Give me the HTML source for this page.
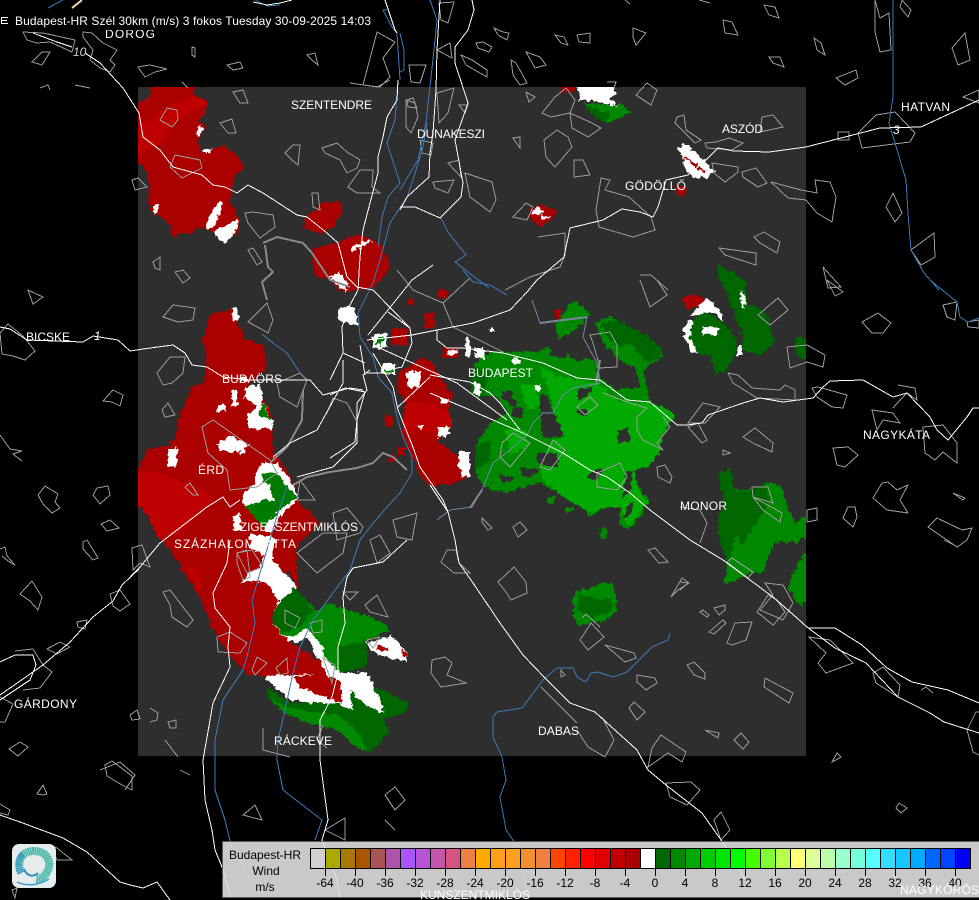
<!DOCTYPE html>
<html><head><meta charset="utf-8"><title>Budapest-HR Wind</title>
<style>
html,body{margin:0;padding:0;background:#000;width:979px;height:900px;overflow:hidden}
svg{display:block;position:absolute;left:0;top:0}
text{font-family:"Liberation Sans",sans-serif;font-size:12px}
.o{fill:none;stroke:#9c9c9c;stroke-width:1}
.w{fill:none;stroke:#fff;stroke-width:1}
.b{fill:none;stroke:#3f78b8;stroke-width:1}
.g{fill:none;stroke:#8a8a8a;stroke-width:2}
.l text{fill:#fff}
.k text{fill:#000;text-anchor:middle}
</style></head><body>
<svg width="979" height="900" viewBox="0 0 979 900" shape-rendering="crispEdges">
<defs>
<filter id="r" filterUnits="userSpaceOnUse" x="0" y="0" width="979" height="900" color-interpolation-filters="sRGB">
<feTurbulence type="fractalNoise" baseFrequency=".22" numOctaves="2" seed="4" result="n"/>
<feDisplacementMap in="SourceGraphic" in2="n" scale="7" xChannelSelector="R" yChannelSelector="G"/>
</filter>
<clipPath id="p"><rect x="138" y="87" width="668" height="669"/></clipPath>
</defs>
<rect width="979" height="900" fill="#000"/>
<rect x="138" y="87" width="668" height="669" fill="#2e2e2e"/>

<g clip-path="url(#p)"><g filter="url(#r)">
<!-- radar reds -->
<g fill="#aa0000">
<path d="M150 80 198 80 193 95 207 100 206 112 198 122 205 125 198 143 202 153 212 148 225 146 240 160 243 168 233 180 230 203 240 220 238 232 225 243 213 233 202 227 190 233 173 237 168 223 158 215 152 213 147 200 150 187 147 170 132 160 132 105 150 97z"/>
<path d="M308 215 323 203 342 201 342 213 333 227 320 235 303 227z"/>
<path d="M312 248 337 243 347 237 363 235 380 243 390 263 387 273 373 287 357 290 343 293 330 280 317 277 312 263z"/>
<path d="M529 210 540 204 557 212 551 220 540 226 530 220z"/>
<path d="M675 186 686 186 686 192 681 197 676 192z"/>
<path d="M560 82 575 82 575 92 562 92z"/>
<path d="M210 315 233 308 238 320 243 337 265 347 265 370 248 385 263 397 272 417 273 453 287 470 293 483 298 500 320 523 300 543 290 560 277 603 273 623 287 640 313 657 330 670 340 682 342 703 323 697 290 690 265 676 247 673 228 653 213 630 200 598 182 570 170 548 158 538 150 520 132 497 132 477 150 448 167 447 175 437 180 415 192 387 205 382 207 347 202 343z"/>
<path d="M398 373 422 358 433 363 440 377 453 395 448 410 452 420 448 433 438 440 462 460 470 467 468 478 453 483 433 487 422 480 413 457 408 450 402 433 405 403 397 387z"/>
<path d="M385 415 393 417 393 427 385 427z M397 447 405 447 405 455 397 455z M390 455 395 455 395 463 390 463z M425 313 435 313 435 328 425 328z M437 290 447 290 447 298 437 298z M408 299 413 299 413 305 408 305z M392 328 408 328 408 345 392 345z M443 348 458 348 458 358 443 358z M555 310 562 310 562 318 555 318z"/>
<path d="M682 300 693 294 708 300 707 305 692 307 688 312z"/>
</g>
<g fill="#bf0000">
<path d="M132 160 160 143 172 125 207 103 195 96 170 105 150 120 132 125z"/>
<path d="M132 477 150 470 197 487 212 497 207 507 180 533 158 538 150 520 132 497z"/>
<path d="M187 568 195 568 203 588 197 588z"/>
<path d="M405 403 428 403 448 410 452 420 448 433 420 430 403 432z"/>
</g>

<!-- radar greens -->
<g fill="#008800">
<path d="M473 367 483 355 497 352 533 352 550 348 550 357 562 358 567 353 577 363 587 358 595 360 600 377 615 390 640 387 637 370 618 358 603 343 595 323 610 317 630 327 650 337 662 350 662 357 643 370 647 387 650 402 673 412 673 420 663 433 660 453 647 467 633 470 637 483 648 500 643 513 627 530 618 523 620 513 620 507 607 507 590 517 580 503 560 493 540 483 523 487 510 493 493 490 483 487 475 470 475 447 490 423 507 413 497 397 477 397z"/>
<path d="M557 323 573 300 590 313 583 323 567 335 558 338z"/>
<path d="M546 497 555 497 555 503 546 503z M567 507 574 507 574 512 567 512z M600 528 607 528 607 538 600 538z"/>
<path d="M720 472 730 468 735 490 752 490 765 482 782 487 788 507 795 523 812 512 812 537 793 542 775 542 762 573 752 573 743 577 723 585 727 567 722 547 717 533 720 513 725 507 720 483z"/>
<path d="M787 587 803 553 812 553 812 600 800 605 793 597z"/>
<path d="M573 598 577 590 588 590 602 583 612 583 617 600 616 610 605 622 591 622 579 627 573 617z"/>
</g>
<g fill="#00aa00">
<path d="M540 367 560 377 577 380 597 383 617 400 650 403 673 413 673 420 663 433 660 453 647 467 633 470 638 487 647 503 627 527 620 507 607 507 590 513 563 497 543 480 540 470 553 440 563 437 553 413 550 393z"/>
<path d="M520 385 535 385 540 405 528 412z M505 430 525 430 530 445 510 455z"/>
</g>
<g fill="#006600">
<path d="M600 323 617 320 650 337 662 350 660 357 647 363 630 343 620 347 603 333z"/>
<path d="M475 447 490 440 490 460 475 470z M473 367 490 370 483 397 470 393z"/>
<path d="M720 472 730 468 735 490 748 492 740 520 730 560 723 585 727 567 722 547 717 533 720 513 725 507 720 483z"/>
<path d="M748 492 765 482 770 500 755 525 742 545 735 530z"/>
<path d="M580 595 600 600 612 598 612 612 590 618 577 610z"/>
<path d="M720 280 745 280 748 305 760 308 768 317 774 343 760 355 743 350 742 335 733 310 725 290z"/>
<path d="M717 265 733 272 745 282 720 282z"/>
<path d="M687 323 705 312 723 323 735 335 737 350 727 370 715 375 712 358 697 353 688 343z"/>
<path d="M795 338 812 337 812 360 798 358 795 350z"/>
</g>
<g fill="#2e2e2e">
<path d="M617 430 628 428 630 442 618 443z M577 390 593 388 587 397 578 400z M577 410 585 408 587 415 577 415z M540 413 553 413 565 437 543 437z M540 395 547 395 553 412 540 412z M502 392 510 390 517 407 503 400z M513 407 523 407 523 417 512 417z M537 453 557 453 558 467 537 463z M520 467 540 470 530 477 523 477z M593 470 603 470 597 480 588 478z M627 470 633 470 630 493 622 497z M627 507 635 500 630 517 623 518z M500 475 515 477 510 482 500 482z"/>
</g>

<!-- white, SW band -->
<g fill="#fff">
<path d="M250 547 267 548 275 563 297 587 278 603 272 620 287 637 297 635 307 628 320 643 327 660 340 673 367 672 373 683 380 700 383 713 363 703 350 690 353 710 337 703 310 703 290 700 267 680 265 676 317 673 330 680 317 657 307 637 297 643 287 640 275 627 273 613 278 600 267 583 253 580 242 583 248 573 260 567 265 550z"/>
<path d="M255 473 262 463 277 463 290 480 298 497 295 503 285 510 270 535 263 527 245 507 240 497 250 487 256 483z"/>
<path d="M250 533 277 538 270 563 262 555 250 547z"/>
<path d="M233 517 240 513 241 530 235 530z"/>
<path d="M245 387 260 383 263 403 273 422 272 430 248 428 248 415 258 407 245 398z"/>
<path d="M217 443 230 436 240 440 250 445 242 451 230 452 220 450z M240 445 244 445 244 455 240 455z"/>
<path d="M168 448 177 448 177 467 168 467z M232 390 237 390 237 407 232 407z M217 405 222 405 222 412 217 412z M222 403 226 403 226 411 222 411z M240 378 248 376 248 382 240 382z"/>
<path d="M232 308 238 308 238 320 233 320z"/>
<path d="M205 223 218 202 223 203 218 217 213 227 208 230z M213 232 237 220 238 227 227 243 220 240z M155 205 159 204 158 213 152 213z M198 125 203 127 199 138 196 136z M203 150 212 148 210 153 204 154z"/>
<path d="M330 277 340 273 347 283 347 292 340 288z M350 248 368 240 372 242 352 252z"/>
<path d="M532 210 538 207 545 213 532 214z M540 215 552 217 542 220z"/>
<path d="M574 82 614 82 615 93 610 100 618 105 607 104 592 100 577 100 579 95z"/>
<path d="M678 148 684 143 695 152 715 172 709 177 695 178 686 170 684 160z"/>
<path d="M340 307 355 307 357 325 345 323 337 318z M373 333 387 333 387 348 373 348z M382 363 395 363 395 375 382 375z M407 372 420 372 420 387 407 387z M441 398 448 398 448 403 441 403z M418 425 423 425 423 428 418 428z M438 427 450 427 448 436 438 437z M459 452 470 450 470 477 462 477 458 465z"/>
<path d="M465 337 470 337 470 357 465 357z M475 348 485 348 485 358 475 358z M513 358 520 358 520 365 513 365z M535 385 540 385 540 390 535 390z M490 328 495 328 495 332 490 332z M475 383 480 383 480 395 475 395z M447 352 457 349 458 354 447 356z"/>
<path d="M690 315 707 298 720 310 723 323 713 313 705 312 695 317z M682 330 688 320 692 322 690 337 697 353 690 352z M703 327 717 327 717 335 703 335z M738 345 743 345 743 355 738 355z M741 290 746 300 744 310 740 300z"/>
<path d="M367 643 390 635 403 647 408 655 407 662 387 658 370 650z"/>
</g>
<g fill="#aa0000">
<path d="M293 677 317 673 340 680 342 703 323 697 300 687z M376 645 390 648 388 651 376 650z M403 650 408 655 406 658 402 654z M682 156 685 156 706 172 704 174z M285 563 295 552 298 590 288 570z"/>
</g>
<g fill="#007a00">
<path d="M262 402 270 417 272 420 258 415z"/>
<path d="M262 473 277 473 290 490 297 497 277 513 263 527 245 507 263 500 273 500 270 483 262 483z"/>
<path d="M378 338 384 338 380 346 376 344z M385 370 393 369 392 374 385 374z"/>
</g>
<g fill="#008800">
<path d="M278 603 295 588 303 598 317 610 330 603 347 610 367 615 383 623 390 630 367 640 367 667 340 673 327 660 320 643 307 628 297 635 287 637 278 630 272 620 273 613z"/>
</g>
<g fill="#006600">
<path d="M278 603 295 588 303 598 313 610 300 627 283 633 272 620 273 613z M337 647 367 640 367 667 340 673z"/>
<path d="M265 685 290 703 310 703 337 703 353 710 350 690 363 703 383 713 380 700 373 687 408 702 405 713 383 720 390 730 377 747 367 753 350 743 337 730 310 723 283 713 270 700z"/>
</g>
<path fill="#008800" d="M270 697 290 708 340 716 360 735 367 753 350 743 337 730 310 723 283 713z"/>
<path fill="#008800" d="M583 103 599 104 622 105 631 112 622 117 607 123 592 115z"/>
<path fill="#006600" d="M583 103 599 110 610 113 607 123 592 115z"/>
</g></g>

<!-- city outlines -->
<path class="o" d="M103 401 113 390 123 395 120 406 112 402z M0 333 8 324 23 336 35 351 25 360 13 356 2 354z M28 290 43 297 33 304z M0 435 10 449 22 451 13 454 22 461 M38 495 45 486 58 494 55 502 60 508 52 513 43 504z M93 495 97 488 108 486 110 495 100 504z M101 524 110 520 119 528 107 531z M83 542 87 540 98 558 93 560 83 549z M0 549 5 547 7 556 15 565 8 561 2 556 M20 594 32 581 42 597 38 610 30 601z M77 622 87 620 85 629 78 627z M110 594 120 590 130 604 120 611 113 606z M15 651 33 649 43 665 52 672 40 688 23 690 M47 649 60 642 70 647 57 654z M0 697 13 704 5 722 0 722 M9 749 20 742 28 747 18 756z M37 794 43 785 47 794 43 795z M105 765 112 761 132 776 132 790 122 785 107 776z M130 715 137 710 140 719 132 720z M0 804 10 810 8 815 0 813 M50 845 57 848 72 860 57 860z M12 890 17 888 15 898z
M23 32 43 33 75 40 72 52 50 42 37 43 27 40z M83 32 92 33 103 43 117 50 110 60 115 65 110 72 100 68 90 60 93 50 83 37z M32 62 42 52 50 52 42 65z M138 67 150 65 167 69 155 72 145 77z M192 47 195 48 195 57 192 55z M227 65 240 62 243 68 233 70z M307 55 315 53 318 65 312 60z M377 32 395 42 383 58 390 77 380 87 363 85z M40 88 48 85 50 90 M75 85 90 88 M182 82 188 88
M494 28 503 32 509 33 507 40 498 35z M476 43 483 42 492 47 489 52 478 48z M555 35 564 37 568 45 561 43z M577 35 590 33 590 43 579 42z M633 28 646 33 636 45 633 37z M723 20 732 22 738 35 725 33z M764 5 775 7 779 18 769 15z M769 57 780 57 784 67 773 63z M814 38 821 43 825 55 817 50z M836 78 856 70 858 78 845 85z M952 48 965 33 970 60 958 65z M902 0 911 10 908 17 900 7z M625 0 630 4 M699 0 710 3 M511 60 516 63 527 83 520 85 513 75z M526 52 540 57 546 65 535 68z M461 55 472 60 487 70 487 77 466 65z M409 65 426 65 420 83 411 82z M437 50 450 43 452 58z M439 3 454 2 448 23 441 20z M875 0 880 18 889 13 891 50 880 52 875 32z M823 267 832 277 841 287 828 288z
M607 82 616 82 614 88 M636 95 647 83 657 90 651 105z M526 92 535 97 529 102z M542 113 555 97 566 88 575 100 570 113 551 117z M570 113 592 123 601 128 588 137 572 128z M513 138 520 137 520 148z M544 140 557 130 568 137 572 147 555 167 546 157z M574 160 583 160 590 175 574 177z M601 178 610 180 605 190 629 197 651 217 655 230 633 237 599 227 596 210z M513 217 526 203 533 207 527 220z M538 237 565 233 565 255 560 267 530 277 505 290 M677 117 684 115 686 130 701 140 695 143 675 123z M705 143 716 142 729 138 743 143 732 150 707 148z M712 163 738 167 738 172 725 182 714 173z M742 172 756 168 767 183 758 187 743 177z M771 182 801 190 817 193 815 180 830 182 836 197 832 222 817 213 806 200 788 198z M754 237 764 232 780 242 777 253 760 243z M719 248 756 253 756 265 725 255z M640 275 651 275 668 290 M762 117 773 115 783 127 760 132z M858 133 876 115 895 112 915 133 910 142 862 148z M838 132 849 132 849 140 838 140z M886 207 893 193 902 213 895 222z M911 250 934 233 935 257 921 265z M963 97 979 90 979 103z M406 100 415 103 418 117 411 133 406 127z M437 93 454 88 448 113 439 123z M459 105 468 105 465 113z M420 140 433 143 431 155 422 153z M433 182 454 180 448 193 435 188z M465 173 492 182 496 200 490 212 470 197z M448 163 459 160 461 177z
M167 108 177 110 178 120 172 127 160 120z M220 123 232 119 236 133 228 133z M233 92 243 90 248 103 240 103z M285 153 293 145 300 145 298 165 292 160z M322 148 337 143 347 152 360 160 357 168 347 173 340 160 325 153z M245 213 253 212 273 215 275 227 260 238 248 223z M248 250 253 248 262 262 257 265z M153 262 160 257 160 270 155 268z M175 272 183 270 190 278 183 283z M132 180 138 178 147 187 135 190z M312 193 318 193 320 210 313 207z M348 187 360 170 373 170 372 187 380 193 357 193z M350 83 377 87 390 80 M407 100 413 98 417 108 408 107z M175 155 200 160 202 168 182 178 170 167z
M163 317 173 305 195 308 193 320 178 322z M157 373 170 357 185 357 183 373 172 383 163 385z M162 410 168 403 175 415 165 417z M202 427 213 420 270 460 277 473 257 487 230 490 227 470 208 453z M185 487 190 483 198 495 193 495z M132 548 142 545 150 567 140 563 133 570z M248 322 267 303 273 320 268 333 263 330z M277 383 300 373 307 380 297 407 280 397z M300 480 315 500 297 500z M333 513 347 508 363 527 360 533 337 540z M297 553 323 533 347 533 343 553 317 573z M370 540 380 535 390 553 377 563z M393 520 417 513 412 540 397 537z M237 553 247 550 250 577 243 580 237 563z M327 413 333 398 347 403 357 422
M443 303 413 290 397 270 M443 303 470 278 M443 303 453 327 463 332 503 352
M590 335 610 332 617 345 617 367 600 368 597 357 593 343z M577 407 590 397 598 405 585 415z M603 393 630 403 647 408 637 417 637 430 643 440 663 450 657 443 670 427 663 417 M597 473 620 463 627 477 617 490 597 487z M657 467 665 465 672 477 670 483 658 477z M482 518 492 528 488 530 482 522z M513 527 520 522 527 530 518 537z M640 280 650 307 667 295 657 280 M502 443 513 433 530 443 510 467 500 457z M553 440 565 450 550 470 540 467z
M758 315 778 298 788 310 770 325z M728 373 738 375 752 388 780 390 785 385 795 390 795 400 757 398 733 383z M787 347 807 345 825 355 823 367 807 362 790 368z M812 388 818 387 847 395 843 408 832 407 817 397z M688 423 703 403 720 407 705 423z M688 427 698 423 707 440 702 443z M743 437 755 428 773 443 772 452 753 443z M723 450 730 453 723 455z M862 322 878 313 891 323 883 333 872 333z M827 280 843 292 835 296z M943 305 957 302 955 320 947 317z M967 322 979 320 979 328 968 327z M872 410 893 413 900 423 883 420 877 430z M898 385 915 388 917 400 907 393 900 400 893 408 M923 427 943 425 957 443 957 463 943 452 935 460 925 453z M833 448 848 447 858 455 845 467 837 465z M882 483 888 482 897 490 908 485 900 500 908 513 887 510 873 498z M848 507 855 507 857 517 853 527 843 518z M953 493 965 498 963 500z M928 527 937 518 962 530 972 528 967 540 957 547z M807 510 817 508 817 520 807 522z M752 487 768 487 773 503 753 497z M753 497 782 513 780 522 763 510z M727 562 732 558 753 572 748 578z M760 610 773 595 765 583 783 585 793 603 783 620z M680 582 688 583 680 590 M680 507 700 510 707 523 700 543
M441 562 447 550 456 550 459 563 470 573 454 573z M498 582 514 567 526 582 527 593 511 600 506 592z M648 550 655 548 668 562 659 563z M671 597 682 578 689 583 678 590z M700 612 703 610 709 615 707 617z M714 608 725 605 725 610 719 615z M709 632 723 620 726 623 714 634z M727 643 735 623 752 622 746 640 732 645z M580 640 591 623 604 637 588 650z M582 618 586 614 600 627 M605 645 634 653 636 658 625 662z M687 665 694 662 705 673 705 679 694 675z M765 678 793 693 789 703 764 687z M757 612 768 595 777 600 785 612 773 625z M637 675 655 678 657 683 646 690 637 682z M629 708 634 702 645 712 637 720z M705 730 719 733 718 738z M734 740 741 733 749 742 743 749z M652 748 661 735 686 752 682 762 668 753 648 767z M602 717 614 740 605 757 588 747 577 730 M541 687 577 723 M561 670 565 675 561 677z M432 660 445 657 452 663 447 675 466 683 441 687 431 673z M666 783 691 782 700 790 687 805 670 797z M714 820 721 812 730 830 721 840z M809 637 830 640 853 663 826 673 818 663 826 653z M873 673 883 667 900 685 898 697 876 683z M921 690 926 687 933 693 M967 730 976 712 979 712 M967 730 973 752 979 755 M832 762 837 753 841 757z M896 808 899 803 907 808 901 813z M944 540 958 547
M163 592 170 590 193 620 187 627 172 617 170 605z M217 637 230 632 247 643 240 653 218 652z M252 670 257 657 267 663 255 675z M276 668 287 658 288 673 280 675z M285 610 300 618 295 628 285 623z M310 623 322 620 322 632 313 633z M323 658 335 665 332 683 328 672z M367 640 380 637 373 648z M343 592 358 592 350 600z M365 605 377 595 388 617 370 612z M237 553 252 550 263 567 247 573z M150 708 158 713 157 720 150 722 M168 722 176 720 176 728 170 728z M165 740 178 757 M263 728 263 750 290 757 M323 725 317 740 327 748 M385 795 395 787 405 800 395 810z M325 830 345 818 345 840z M243 815 255 805 262 820z M180 770 190 775 M100 770 120 762 135 775 125 790 M385 820 395 830"/>

<!-- gray roads -->
<path class="g" d="M263 243 277 237 303 243 312 253 330 280 350 287 M265 245 268 267 273 272 262 282 267 300 M293 485 307 477 330 472 357 468 373 463 383 453 393 457 407 470 M540 323 587 317 M270 463 287 447 302 420 303 390 M596 385 600 360 M482 490 470 508"/>
<path class="o" stroke="#7d90a8" d="M541 687 577 723"/>

<!-- rivers -->
<path class="b" d="M430 0 437 20 435 40 430 87 426 123 418 160 400 190 M427 123 423 147 413 180 407 197 390 223 380 260 373 283 358 313 360 337 373 357 378 377 392 393 397 417 403 437 412 457 412 473 400 493 387 507 370 527 360 540 350 570 330 597 313 620 300 647 293 673 285 710 278 740 277 760 283 790 322 820 315 840 M287 487 278 513 263 563 252 600 255 623 247 657 243 670 223 700 215 740 215 790 225 820 231 845 245 870 262 900 M893 0 893 67 893 97 889 123 895 143 906 180 908 213 911 250 924 273 939 290 M930 280 957 302 960 317 968 322 979 318 M670 633 668 640 652 647 641 658 627 672 613 677 598 672 591 673 586 682 577 677 573 668 557 668 543 680 522 708 497 712 493 717 493 737 502 757 506 780 500 797 506 830 513 840 518 855 530 900 M398 80 395 120 387 143 398 177 400 183 388 197 382 217 378 247 M387 10 383 10 392 27 397 33 400 80 M400 33 404 50 404 70 400 72 M48 8 63 0 M255 0 267 6 280 5 M273 343 287 353 300 373 M273 343 262 334 M463 270 473 282 490 285 507 295 M441 218 448 232 466 255 455 262 472 275 489 288"/>
<path fill="none" stroke="#6a87a8" stroke-width="1" d="M532 300 540 323 587 317 583 337 597 363 600 383 573 388 563 395 553 413 543 413 533 423 527 435 510 450 493 463 482 490 472 507 450 510 437 520"/>
<path fill="none" stroke="#f5d2a4" stroke-width="2" d="M72 8 82 0 M0 14 8 16"/>

<!-- white roads -->
<path class="w" d="M979 100 921 127 880 128 806 147 769 152 734 151 718 148 706 160 688 175 666 180 658 207 653 217 640 212 622 209 603 220 570 228 564 257 537 280 527 292 510 310 473 323 437 330 412 335 367 340
M368 335 412 280 433 265 M373 345 457 383 507 420 M430 375 470 382 490 393 500 403 510 417 520 430 M430 393 463 407 523 433 563 453 590 470 607 477 630 493 650 510 690 540 723 560 773 597 797 618 807 627 835 648 866 663 898 697 930 713 944 722 979 733 M809 628 835 628 862 645 887 668 912 682 948 690 979 703
M437 330 437 340 447 348 463 348 503 353 543 363 577 378 600 380 627 400 650 402 677 425 687 425 702 423 708 415 743 403 760 398 783 402 813 398 823 387 830 381 863 380 893 397 907 393 930 417 937 430 948 440 967 417 973 408 979 408
M440 0 437 50 436 90 433 133 430 153 429 177 407 197 400 210 M472 0 474 10 468 30 455 47 455 63 468 103 455 140 463 183 461 197 440 218 415 207 400 207
M398 80 397 100 387 117 383 137 378 157 378 173 370 203 363 230 360 257 358 290
M139 113 143 137 160 150 173 167 202 175 213 185 225 187 237 193 248 185 263 193 297 215 307 217 327 233 338 243 347 277 357 287 373 290 410 328 412 343 402 367 388 370 M388 312 410 328 M358 290 350 305 342 327 343 353 330 380
M33 33 57 42 72 47 M85 53 100 63 123 88 139 113
M0 327 10 329 27 340 83 342 93 336 118 340 130 351 150 348 173 345 185 353 192 365 207 367 223 377 250 380 297 380 310 380 323 395 350 388 363 390
M139 569 122 585 113 601 93 617 70 642 43 665 0 695 M0 662 15 655 33 655 36 665 30 680 0 700 M130 577 140 567 160 543 207 507 223 497 230 507 240 500 M273 457 290 443 317 430 343 383 343 360 M297 477 333 467 357 443 357 403 367 390 363 375 370 370
M0 815 20 822 63 838 87 852 120 882 130 885 143 888 157 882 170 900
M230 540 227 563 213 593 215 608 230 627 228 647 230 667 213 703 203 760 205 800 212 830 215 850 222 867 232 900
M407 540 383 562 353 568 347 577 343 597 345 623 338 647 338 673 332 697 320 720 320 760 328 820 322 840 337 880 340 898
M448 512 455 540 459 563 473 583 500 623 523 655 545 678 570 703 595 712 637 750 648 770 666 785 702 813 719 837 735 860 745 880
M373 353 393 387 398 410 413 447 420 467 443 500 448 512 M430 485 448 512
M367 373 395 373 M330 395 345 388 365 392 357 420 355 442 330 458 M343 353 365 363 M398 407 430 377 M365 375 360 345
M253 2 267 5 280 3 292 0 M385 0 395 30 397 33"/>

<!-- small road numbers -->
<g fill="#cfcfcf" font-style="italic">
<text x="73" y="56" font-size="10">10</text>
<text x="893" y="134" fill="#fff">3</text>
<text x="94" y="340" fill="#fff" font-size="10">1</text>
</g>

<!-- map labels -->
<g class="l">
<text x="291" y="109" textLength="81">SZENTENDRE</text>
<text x="417" y="138" textLength="68">DUNAKESZI</text>
<text x="722" y="133" textLength="41">ASZÓD</text>
<text x="901" y="111" textLength="49">HATVAN</text>
<text x="625" y="190" textLength="61">GÖDÖLLŐ</text>
<text x="26" y="341" textLength="44">BICSKE</text>
<text x="222" y="383" textLength="60">BUDAÖRS</text>
<text x="468" y="377" textLength="65">BUDAPEST</text>
<text x="863" y="439" textLength="67">NAGYKÁTA</text>
<text x="198" y="474" textLength="26">ÉRD</text>
<text x="232" y="531" textLength="126">SZIGETSZENTMIKLÓS</text>
<text x="174" y="548" textLength="122">SZÁZHALOMBATTA</text>
<text x="680" y="510" textLength="47">MONOR</text>
<text x="14" y="708" textLength="63">GÁRDONY</text>
<text x="274" y="745" textLength="58">RÁCKEVE</text>
<text x="538" y="735" textLength="41">DABAS</text>
<text x="105" y="38" textLength="50">DOROG</text>
</g>

<!-- title band -->
<rect x="0" y="9" width="380" height="21" fill="#000"/>
<text x="15" y="25" fill="#fff" textLength="356">Budapest-HR Szél 30km (m/s) 3 fokos Tuesday 30-09-2025 14:03</text>
<path fill="none" stroke="#fff" d="M1 17.5H8M1 20.5H7M1 23.5H8M1.5 17V24"/>

<!-- legend -->
<rect x="222.5" y="841.5" width="757" height="56" fill="#dfdfdf" fill-opacity=".9" stroke="#5a5a5a"/>
<rect x="222" y="898" width="757" height="2" fill="#000"/>
<g shape-rendering="crispEdges" stroke="#000">
<rect x="310.5" y="848.5" width="15" height="20" fill="#d0d0d0"/>
<rect x="325.5" y="848.5" width="15" height="20" fill="#aaaa00"/>
<rect x="340.5" y="848.5" width="15" height="20" fill="#a87800"/>
<rect x="355.5" y="848.5" width="15" height="20" fill="#aa5500"/>
<rect x="370.5" y="848.5" width="15" height="20" fill="#aa5555"/>
<rect x="385.5" y="848.5" width="15" height="20" fill="#aa55aa"/>
<rect x="400.5" y="848.5" width="15" height="20" fill="#aa55ff"/>
<rect x="415.5" y="848.5" width="15" height="20" fill="#b555d5"/>
<rect x="430.5" y="848.5" width="15" height="20" fill="#c555aa"/>
<rect x="445.5" y="848.5" width="15" height="20" fill="#d55580"/>
<rect x="460.5" y="848.5" width="15" height="20" fill="#ee8044"/>
<rect x="475.5" y="848.5" width="15" height="20" fill="#ffaa00"/>
<rect x="490.5" y="848.5" width="15" height="20" fill="#ff9f1a"/>
<rect x="505.5" y="848.5" width="15" height="20" fill="#ffa020"/>
<rect x="520.5" y="848.5" width="15" height="20" fill="#f59030"/>
<rect x="535.5" y="848.5" width="15" height="20" fill="#ee8044"/>
<rect x="550.5" y="848.5" width="15" height="20" fill="#ff4400"/>
<rect x="565.5" y="848.5" width="15" height="20" fill="#ff2200"/>
<rect x="580.5" y="848.5" width="15" height="20" fill="#ff0000"/>
<rect x="595.5" y="848.5" width="15" height="20" fill="#e00000"/>
<rect x="610.5" y="848.5" width="15" height="20" fill="#c00000"/>
<rect x="625.5" y="848.5" width="15" height="20" fill="#aa0000"/>
<rect x="640.5" y="848.5" width="15" height="20" fill="#ffffff"/>
<rect x="655.5" y="848.5" width="15" height="20" fill="#006600"/>
<rect x="670.5" y="848.5" width="15" height="20" fill="#008800"/>
<rect x="685.5" y="848.5" width="15" height="20" fill="#00aa00"/>
<rect x="700.5" y="848.5" width="15" height="20" fill="#00cc00"/>
<rect x="715.5" y="848.5" width="15" height="20" fill="#00e600"/>
<rect x="730.5" y="848.5" width="15" height="20" fill="#00ff00"/>
<rect x="745.5" y="848.5" width="15" height="20" fill="#44ff00"/>
<rect x="760.5" y="848.5" width="15" height="20" fill="#7fff33"/>
<rect x="775.5" y="848.5" width="15" height="20" fill="#b8ff4d"/>
<rect x="790.5" y="848.5" width="15" height="20" fill="#ffff77"/>
<rect x="805.5" y="848.5" width="15" height="20" fill="#ddff99"/>
<rect x="820.5" y="848.5" width="15" height="20" fill="#bbffaa"/>
<rect x="835.5" y="848.5" width="15" height="20" fill="#99ffcc"/>
<rect x="850.5" y="848.5" width="15" height="20" fill="#77ffdd"/>
<rect x="865.5" y="848.5" width="15" height="20" fill="#55ffff"/>
<rect x="880.5" y="848.5" width="15" height="20" fill="#33ddff"/>
<rect x="895.5" y="848.5" width="15" height="20" fill="#1ac6ff"/>
<rect x="910.5" y="848.5" width="15" height="20" fill="#00aaff"/>
<rect x="925.5" y="848.5" width="15" height="20" fill="#0066ff"/>
<rect x="940.5" y="848.5" width="15" height="20" fill="#0044ff"/>
<rect x="955.5" y="848.5" width="15" height="20" fill="#0000ff"/>
</g>
<path stroke="#000" fill="none" d="M325.5 868V876M355.5 868V876M385.5 868V876M415.5 868V876M445.5 868V876M475.5 868V876M505.5 868V876M535.5 868V876M565.5 868V876M595.5 868V876M625.5 868V876M655.5 868V876M685.5 868V876M715.5 868V876M745.5 868V876M775.5 868V876M805.5 868V876M835.5 868V876M865.5 868V876M895.5 868V876M925.5 868V876M955.5 868V876"/>
<g class="k">
<text x="265" y="859">Budapest-HR</text>
<text x="266" y="875">Wind</text>
<text x="265" y="891">m/s</text>
<text x="325" y="887">-64</text><text x="355" y="887">-40</text><text x="385" y="887">-36</text><text x="415" y="887">-32</text><text x="445" y="887">-28</text><text x="475" y="887">-24</text><text x="505" y="887">-20</text><text x="535" y="887">-16</text><text x="565" y="887">-12</text><text x="595" y="887">-8</text><text x="625" y="887">-4</text><text x="655" y="887">0</text><text x="685" y="887">4</text><text x="715" y="887">8</text><text x="745" y="887">12</text><text x="775" y="887">16</text><text x="805" y="887">20</text><text x="835" y="887">24</text><text x="865" y="887">28</text><text x="895" y="887">32</text><text x="925" y="887">36</text><text x="955" y="887">40</text>
</g>
<g class="l">
<text x="420" y="899" textLength="110">KUNSZENTMIKLÓS</text>
<text x="900" y="894" textLength="79">NAGYKŐRÖS</text>
</g>

<!-- logo -->
<g shape-rendering="geometricPrecision" fill="none">
<rect x="12" y="844" width="44" height="44" rx="7" fill="#e6ebee"/>
<path d="M21 873C16 861 22 851 34 851C46 851 52 861 48 870C45 877 40 880 36 879" stroke="#3fb5a2" stroke-width="8" stroke-dasharray="1.6 .5"/>
<path d="M21 873C17 866 18 858 23 854" stroke="#3a9cc0" stroke-width="6" stroke-dasharray="1.6 .5"/>
<path d="M24 869C27 877 34 877 38 873" stroke="#2f8fc0" stroke-width="2"/>
<path d="M17 882C26 886 38 886 49 879" stroke="#3c9fd0" stroke-width="1.5"/>
</g>
</svg>
</body></html>
